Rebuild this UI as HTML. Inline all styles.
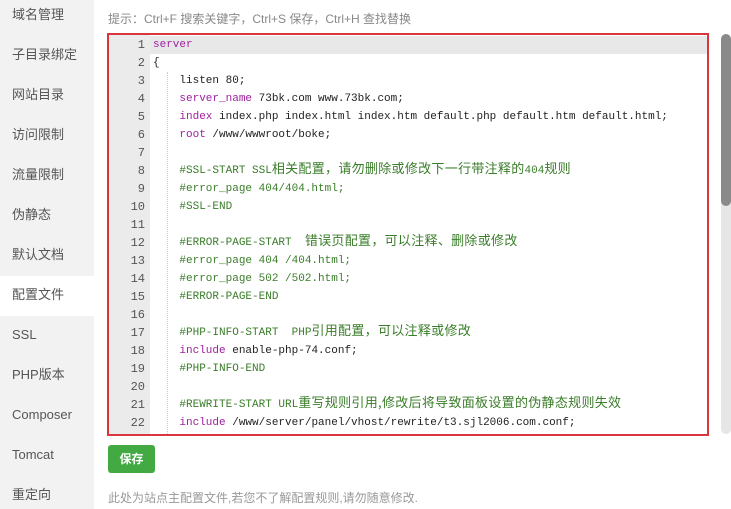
<!DOCTYPE html>
<html><head><meta charset="utf-8"><style>
*{margin:0;padding:0;box-sizing:border-box}
body{width:731px;height:509px;overflow:hidden;background:#fff;font-family:"Liberation Sans","Noto Sans CJK SC",sans-serif;position:relative}
.side{position:absolute;left:0;top:0;width:94px;height:509px;background:#f2f2f2}
.side .it{position:absolute;left:12px;font-size:13px;color:#555;line-height:20px}
.act{position:absolute;left:0;top:276px;width:94px;height:40px;background:#fff}
.hint{position:absolute;left:108px;top:10px;font-size:12px;color:#888}
.ed{position:absolute;left:107px;top:33px;width:602px;height:403px;border:2px solid #d9363e;overflow:hidden}
.gut{position:absolute;left:0;top:0;width:41px;height:100%;background:#ebebeb}
.hl{position:absolute;left:0;top:1px;width:100%;height:18px;background:#e8e8e8}
.code{position:absolute;left:0;top:1px;font-family:"Liberation Mono","Noto Sans CJK SC",monospace;font-size:11px;line-height:18px;white-space:pre;color:#222}
.ln{position:absolute;left:0;width:36px;text-align:right;color:#555;font-size:12px}
.tx{position:absolute;left:44px;height:18px;line-height:18px}
.k{color:#a020a0}.c{color:#3a7d2a}
.z{font-family:"Noto Sans CJK SC",sans-serif;font-size:13px;line-height:1px;letter-spacing:0.3px}
.guide{position:absolute;left:58px;top:37px;height:370px;border-left:1px dotted #ccc}
.sb{position:absolute;left:721px;top:34px;width:10px;height:400px;background:#e6e6e6;border-radius:5px}
.th{position:absolute;left:721px;top:34px;width:10px;height:172px;background:#8a8a8a;border-radius:5px}
.btn{position:absolute;left:108px;top:445px;width:47px;height:28px;background:#43a943;border-radius:3px;color:#fff;font-size:12px;font-weight:bold;text-align:center;line-height:28px}
.foot{position:absolute;left:108px;top:489px;font-size:12px;color:#999}
</style></head><body>
<div class="side">
<div class="act"></div>
<div class="it" style="top:5px">域名管理</div>
<div class="it" style="top:45px">子目录绑定</div>
<div class="it" style="top:85px">网站目录</div>
<div class="it" style="top:125px">访问限制</div>
<div class="it" style="top:165px">流量限制</div>
<div class="it" style="top:205px">伪静态</div>
<div class="it" style="top:245px">默认文档</div>
<div class="it" style="top:285px">配置文件</div>
<div class="it" style="top:325px">SSL</div>
<div class="it" style="top:365px">PHP版本</div>
<div class="it" style="top:405px">Composer</div>
<div class="it" style="top:445px">Tomcat</div>
<div class="it" style="top:485px">重定向</div>
</div>
<div class="hint">提示：Ctrl+F 搜索关键字，Ctrl+S 保存，Ctrl+H 查找替换</div>
<div class="ed">
<div class="hl"></div>
<div class="gut"></div>
<div class="guide"></div>
<div class="code">
<div class="ln" style="top:0">1</div><div class="tx k" style="top:0">server</div>
<div class="ln" style="top:18px">2</div><div class="tx" style="top:18px">{</div>
<div class="ln" style="top:36px">3</div><div class="tx" style="top:36px">    listen 80;</div>
<div class="ln" style="top:54px">4</div><div class="tx" style="top:54px">    <span class="k">server_name</span> 73bk.com www.73bk.com;</div>
<div class="ln" style="top:72px">5</div><div class="tx" style="top:72px">    <span class="k">index</span> index.php index.html index.htm default.php default.htm default.html;</div>
<div class="ln" style="top:90px">6</div><div class="tx" style="top:90px">    <span class="k">root</span> /www/wwwroot/boke;</div>
<div class="ln" style="top:108px">7</div>
<div class="ln" style="top:126px">8</div><div class="tx c" style="top:126px">    #SSL-START SSL<span class="z">相关配置，请勿删除或修改下一行带注释的</span>404<span class="z">规则</span></div>
<div class="ln" style="top:144px">9</div><div class="tx c" style="top:144px">    #error_page 404/404.html;</div>
<div class="ln" style="top:162px">10</div><div class="tx c" style="top:162px">    #SSL-END</div>
<div class="ln" style="top:180px">11</div>
<div class="ln" style="top:198px">12</div><div class="tx c" style="top:198px">    #ERROR-PAGE-START  <span class="z">错误页配置，可以注释、删除或修改</span></div>
<div class="ln" style="top:216px">13</div><div class="tx c" style="top:216px">    #error_page 404 /404.html;</div>
<div class="ln" style="top:234px">14</div><div class="tx c" style="top:234px">    #error_page 502 /502.html;</div>
<div class="ln" style="top:252px">15</div><div class="tx c" style="top:252px">    #ERROR-PAGE-END</div>
<div class="ln" style="top:270px">16</div>
<div class="ln" style="top:288px">17</div><div class="tx c" style="top:288px">    #PHP-INFO-START  PHP<span class="z">引用配置，可以注释或修改</span></div>
<div class="ln" style="top:306px">18</div><div class="tx" style="top:306px">    <span class="k">include</span> enable-php-74.conf;</div>
<div class="ln" style="top:324px">19</div><div class="tx c" style="top:324px">    #PHP-INFO-END</div>
<div class="ln" style="top:342px">20</div>
<div class="ln" style="top:360px">21</div><div class="tx c" style="top:360px">    #REWRITE-START URL<span class="z">重写规则引用,修改后将导致面板设置的伪静态规则失效</span></div>
<div class="ln" style="top:378px">22</div><div class="tx" style="top:378px">    <span class="k">include</span> /www/server/panel/vhost/rewrite/t3.sjl2006.com.conf;</div>
</div>
</div>
<div class="sb"></div><div class="th"></div>
<div class="btn">保存</div>
<div class="foot">此处为站点主配置文件,若您不了解配置规则,请勿随意修改.</div>
</body></html>
